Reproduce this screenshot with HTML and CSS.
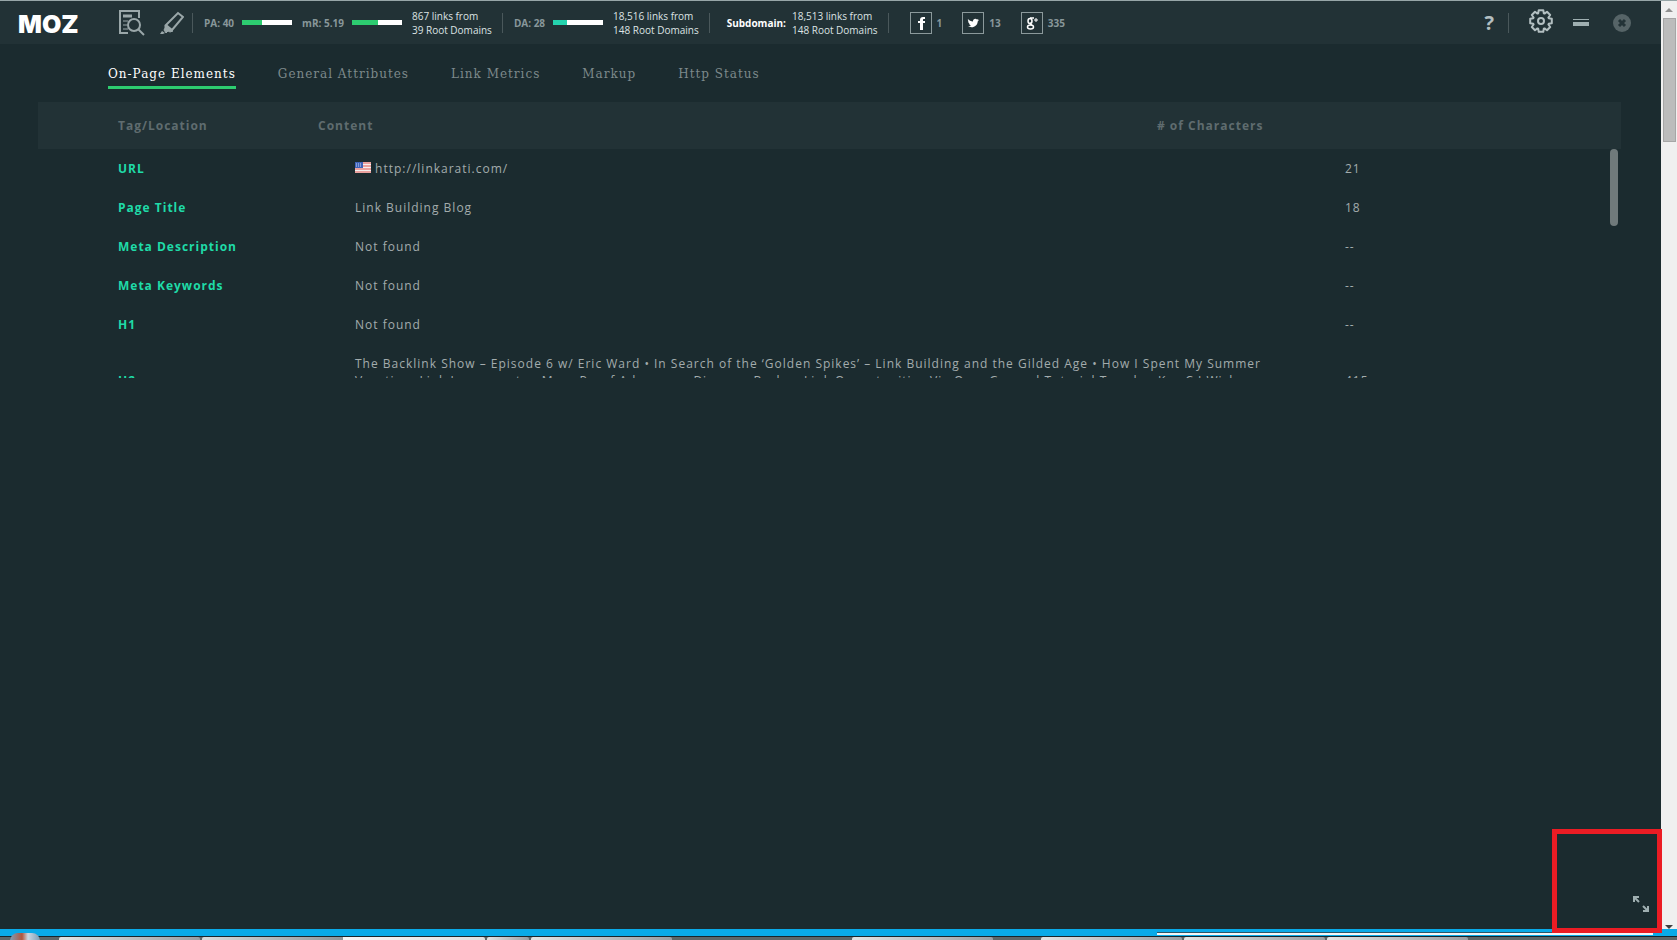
FILE: index.html
```html
<!DOCTYPE html>
<html lang="en">

<head>
    <meta charset="UTF-8">
    <meta name="viewport" content="width=device-width, initial-scale=1.0">
    <title>MozBar - On-Page Elements</title>
    <link rel="stylesheet" href="styles.css">
</head>

<body>

    <div class="window">
        <div class="page">
            <header class="toolbar">
                <a class="logo" href="#">MOZ</a>

                <div class="tools">
                    <button class="icon-btn" type="button" aria-label="Page analysis">
                        <svg width="26" height="26" viewBox="0 0 26 26" fill="none" stroke="#9aa7a9" stroke-width="2">
                            <path d="M9 23H1V1h19v7" />
                            <path d="M4 6h9" stroke-width="3" />
                            <path d="M4 11h5M4 15h4M4 19h5" stroke-width="1" />
                            <circle cx="15" cy="15" r="6" />
                            <path d="M19 19l6 6" />
                        </svg>
                    </button>
                    <button class="icon-btn" type="button" aria-label="Highlight links">
                        <svg width="24" height="24" viewBox="0 0 24 24" fill="none" stroke="#9aa7a9" stroke-width="2">
                            <path d="M6 14L18 2l5 4-11 13z" />
                            <path d="M5 14l8 6-3 1-2-1-2 2-2-3 1-2z" fill="#9aa7a9" stroke-width="1" />
                            <path d="M2 20l3 2-2 1H0z" fill="#9aa7a9" stroke="none" />
                        </svg>
                    </button>
                </div>

                <div class="group">
                    <span class="metric">PA: 40</span>
                    <span class="bar"><span class="fill" style="width: 40%"></span></span>
                    <span class="metric metric-next">mR: 5.19</span>
                    <span class="bar"><span class="fill" style="width: 52%"></span></span>
                    <p class="links">867 links from<br>39 Root Domains</p>
                </div>

                <div class="group">
                    <span class="metric">DA: 28</span>
                    <span class="bar"><span class="fill fill-teal" style="width: 28%"></span></span>
                    <p class="links">18,516 links from<br>148 Root Domains</p>
                </div>

                <div class="group group-sub">
                    <strong class="subdomain">Subdomain:</strong>
                    <p class="links">18,513 links from<br>148 Root Domains</p>
                </div>

                <div class="group social">
                    <a class="share" href="#" aria-label="Facebook">
                        <svg width="22" height="22" viewBox="0 0 22 22">
                            <path d="M10 18v-7H8V9h2V8c0-2 1-3 3-3h2v2h-1c-1 0-1 0-1 1v1h2v2h-2v7z" fill="#fff" />
                        </svg>
                    </a>
                    <span class="count">1</span>
                    <a class="share" href="#" aria-label="Twitter">
                        <svg width="22" height="22" viewBox="0 0 22 22">
                            <path d="M6 7c1 1.500 3 2.500 5 2.500C10.800 7 13.500 6 15 7.500l1.600-.6-.9 1.400 1.300-.3-1.300 1.400c0 4-5 7.600-9.700 4.700 1.300 0 2.300-.3 3-.9-1.200-.2-1.800-.8-2.200-1.600h1C6.600 11 6 10.200 6 9.300l1 .2C6 8.700 5.600 8 6 7z" fill="#fff" />
                        </svg>
                    </a>
                    <span class="count">13</span>
                    <a class="share" href="#" aria-label="Google Plus">
                        <svg width="22" height="22" viewBox="0 0 22 22" fill="none" stroke="#fff" stroke-width="1.500">
                            <ellipse cx="9" cy="9" rx="2" ry="2.500" />
                            <path d="M13 6H9M10 11c-2 1 1 2 1 2" />
                            <ellipse cx="9.500" cy="15" rx="3" ry="2" />
                            <path d="M13 8h4M15 6v4" stroke-width="1" />
                        </svg>
                    </a>
                    <span class="count">335</span>
                </div>

                <div class="controls">
                    <button class="help" type="button" aria-label="Help">?</button>
                    <button class="icon-btn settings" type="button" aria-label="Settings">
                        <svg width="24" height="24" viewBox="-12 -12 24 24" fill="none" stroke="#b3bfc1" stroke-width="2" stroke-linejoin="round">
                            <path d="M-2.800-7.700L-2.300-10.800 2.300-10.800 2.800-7.700 3.500-7.400 6-9.200 9.200-6 7.400-3.500 7.700-2.800 10.800-2.300 10.800 2.300 7.700 2.800 7.400 3.500 9.200 6 6 9.200 3.500 7.400 2.800 7.700 2.300 10.800-2.300 10.800-2.800 7.700-3.500 7.400-6 9.200-9.200 6-7.400 3.500-7.700 2.800-10.800 2.300-10.800-2.300-7.700-2.800-7.400-3.500-9.200-6-6-9.200-3.500-7.400z" />
                            <circle r="3" />
                        </svg>
                    </button>
                    <button class="icon-btn" type="button" aria-label="Minimize">
                        <svg width="16" height="8" viewBox="0 0 16 8" fill="#9fafb1">
                            <path d="M0 0h16v1H0zM0 3h16v4H0z" />
                        </svg>
                    </button>
                    <button class="icon-btn close" type="button" aria-label="Close">
                        <svg width="18" height="18" viewBox="0 0 18 18">
                            <circle cx="9" cy="9" r="9" fill="#566467" />
                            <path d="M6 6l6 6M12 6l-6 6" stroke="#233337" stroke-width="3" />
                        </svg>
                    </button>
                </div>
            </header>

            <nav class="tabs">
                <a class="tab active" href="#">On-Page Elements</a>
                <a class="tab" href="#">General Attributes</a>
                <a class="tab" href="#">Link Metrics</a>
                <a class="tab" href="#">Markup</a>
                <a class="tab" href="#">Http Status</a>
            </nav>

            <main class="panel">
                <table class="head-table">
                    <thead>
                        <tr>
                            <th class="col-tag">Tag/Location</th>
                            <th class="col-content">Content</th>
                            <th># of Characters</th>
                        </tr>
                    </thead>
                </table>
                <div class="scroll-area">
                    <table class="data-table">
                        <tbody>
                            <tr>
                                <th scope="row">URL</th>
                                <td class="content">
                                    <svg class="flag" width="16" height="11" viewBox="0 0 16 11">
                                        <path d="M0 0h16v11H0z" fill="#f4eeee" />
                                        <path d="M0 1h16M0 4h16M0 7h16M0 10h16" stroke="#e0544e" stroke-width="1" />
                                        <path d="M0 0h8v6H0z" fill="#3d62b8" />
                                        <path d="M1 2h6M1 4h6" stroke="#c9d4f0" stroke-dasharray="1 1" />
                                    </svg>
                                    http://linkarati.com/
                                </td>
                                <td>21</td>
                            </tr>
                            <tr>
                                <th scope="row">Page Title</th>
                                <td class="content">Link Building Blog</td>
                                <td>18</td>
                            </tr>
                            <tr>
                                <th scope="row">Meta Description</th>
                                <td class="content">Not found</td>
                                <td>--</td>
                            </tr>
                            <tr>
                                <th scope="row">Meta Keywords</th>
                                <td class="content">Not found</td>
                                <td>--</td>
                            </tr>
                            <tr>
                                <th scope="row">H1</th>
                                <td class="content">Not found</td>
                                <td>--</td>
                            </tr>
                            <tr>
                                <th scope="row">H2</th>
                                <td class="content">The Backlink Show – Episode 6 w/ Eric Ward • In Search of the ‘Golden Spikes’ – Link Building and the Gilded Age • How I Spent My Summer Vacation: Link Juggernauts • More Proof Advocacy • Discover Broken Link Opportunities Via Over General Tutorial Trends • Key C I Wish More People Knew About Link Building</td>
                                <td>415</td>
                            </tr>
                        </tbody>
                    </table>
                    <span class="scroll-thumb"></span>
                </div>
            </main>

            <div class="highlight">
                <button class="icon-btn" type="button" aria-label="Expand">
                    <svg width="16" height="16" viewBox="0 0 16 16" fill="none" stroke="#9fafb1" stroke-width="2">
                        <path d="M1 6V1h5M1 1l5 5M10 15h5v-5M15 15l-5-5" />
                    </svg>
                </button>
            </div>
        </div>

        <div class="scrollbar">
            <span class="arrow arrow-up"></span>
            <span class="scrollbar-thumb"></span>
            <span class="arrow arrow-down"></span>
        </div>
    </div>

    <footer class="taskbar">
        <div class="strip"><span class="strip-white"></span></div>
        <div class="tasks">
            <span class="start"></span>
            <span class="task task-wide"></span>
            <span class="task task-double"></span>
            <span class="task task-small"></span>
            <span class="task task-wide"></span>
            <span class="task-gap"></span>
            <span class="task task-wide"></span>
            <span class="task-space"></span>
            <span class="task task-wide"></span>
            <span class="task task-wide"></span>
            <span class="task task-wide"></span>
        </div>
    </footer>

</body>

</html>
```
FILE: styles.css
```css
* {
    box-sizing: border-box;
}

body {
    margin: 0;
    height: 100vh;
    display: flex;
    flex-direction: column;
    overflow: hidden;
    background-color: #1b2b2f;
    color: #a3acad;
    font-family: 'Open Sans', 'Noto Sans', sans-serif;
    font-size: 12px;
}

a {
    color: inherit;
    text-decoration: none;
}

button {
    padding: 0;
    border: none;
    background: none;
    color: inherit;
    font-family: inherit;
    cursor: pointer;
}

svg {
    display: block;
}

.window {
    flex: 1;
    min-height: 0;
    display: flex;
    border-top: 1px solid #97a6a8;
}

.page {
    position: relative;
    flex: 1;
    min-width: 0;
}

/* top bar */
.toolbar {
    display: flex;
    align-items: center;
    height: 43px;
    padding: 0 30px 0 18px;
    background-color: #223236;
    font-size: 10px;
    white-space: nowrap;
}

.logo {
    width: 101px;
    padding-top: 2px;
    color: #fff;
    font-family: Inter, sans-serif;
    font-size: 25px;
    font-weight: 900;
}

.tools {
    display: flex;
    align-items: center;
    gap: 15px;
    padding-right: 8px;
}

.group {
    display: flex;
    align-items: center;
    height: 20px;
    padding: 0 10px 0 11px;
    border-left: 1px solid #4a585b;
}

.group-sub {
    padding-left: 17px;
}

.metric,
.count {
    color: #88979a;
    font-weight: 700;
}

.metric-next {
    margin-left: 10px;
}

.bar {
    width: 50px;
    height: 5px;
    margin-left: 8px;
    background-color: #fff;
}

.fill {
    display: block;
    height: 5px;
    background-color: #2dcc70;
}

.fill-teal {
    background-color: #24d3ae;
}

.links {
    margin: 0 0 0 10px;
    color: #dde3e4;
    line-height: 14px;
}

.subdomain {
    color: #fff;
}

.group-sub .links {
    margin-left: 6px;
}

.social {
    padding-left: 21px;
}

.share {
    width: 22px;
    height: 22px;
    border: 1px solid #8b999b;
}

.share svg {
    margin: -1px;
}

.count {
    margin: 0 20px 0 5px;
}

.controls {
    display: flex;
    align-items: center;
    gap: 20px;
    margin-left: auto;
}

.help {
    height: 20px;
    padding: 0 14px 0 0;
    border-right: 1px solid #4a585b;
    color: #b3bfc1;
    font-size: 20px;
    font-weight: 700;
    line-height: 18px;
}

.settings {
    padding-bottom: 3px;
}

.close {
    margin-left: 4px;
}

/* tabs */
.tabs {
    display: flex;
    gap: 42px;
    padding: 22px 0 13px 108px;
    color: #7d898b;
    font-family: 'DejaVu Serif', serif;
    font-size: 12px;
    line-height: 16px;
    letter-spacing: 1px;
}

.tab {
    padding-bottom: 4px;
    border-bottom: 3px solid transparent;
}

.tab.active {
    border-bottom-color: #2dcc70;
    color: #fff;
}

/* tables */
.panel {
    margin: 0 40px 0 38px;
    letter-spacing: 1px;
}

table {
    width: 100%;
    border-collapse: collapse;
    table-layout: fixed;
}

th,
td {
    padding: 0;
    text-align: left;
}

.head-table {
    height: 47px;
    background-color: #223236;
    color: #5f6c6f;
}

.head-table .col-tag {
    width: 280px;
    padding-left: 80px;
}

.head-table .col-content {
    width: 53%;
}

.scroll-area {
    position: relative;
    height: 229px;
    overflow: hidden;
}

.data-table th,
.data-table td {
    padding: 11px 0;
    line-height: 17px;
}

.data-table th {
    width: 317px;
    padding-left: 80px;
    color: #1fdba8;
}

.data-table td:last-child {
    width: 276px;
}

.data-table .content {
    padding-right: 70px;
}

.flag {
    display: inline-block;
}

.scroll-thumb {
    position: absolute;
    top: 0;
    right: 3px;
    width: 8px;
    height: 77px;
    border-radius: 4px;
    background-color: #707a7b;
}

/* red frame round the expand button */
.highlight {
    position: absolute;
    right: -1px;
    bottom: -4px;
    z-index: 1;
    display: flex;
    align-items: flex-end;
    justify-content: flex-end;
    width: 110px;
    height: 104px;
    padding: 0 8px 16px 0;
    border: 5px solid #eb1c24;
}

/* browser scrollbar */
.scrollbar {
    display: flex;
    flex-direction: column;
    align-items: center;
    width: 16px;
    padding: 7px 0 0;
    background-color: #f0f0f0;
}

.arrow {
    border: 4px solid transparent;
}

.arrow-up {
    border-top: none;
    border-bottom-color: #909090;
}

.arrow-down {
    margin-top: auto;
    border-bottom: none;
    border-top-color: #404040;
}

.scrollbar-thumb {
    width: 13px;
    height: 124px;
    margin-top: 6px;
    border: 1px solid #a6a6a6;
    background-color: #bcbcbc;
}

/* desktop taskbar */
.strip {
    display: flex;
    justify-content: flex-end;
    align-items: flex-end;
    height: 7px;
    padding: 0 24px 1px 0;
    background-color: #09aae8;
}

.strip-white {
    width: 30%;
    height: 3px;
    border-top: 1px solid #2d5566;
    background-color: #f4f6f7;
}

.tasks {
    display: flex;
    gap: 2px;
    height: 4px;
    border-top: 1px solid #17252b;
    background-color: #5d6668;
}

.start {
    width: 30px;
    height: 8px;
    margin: -4px 17px 0 10px;
    border-radius: 14px 14px 0 0;
    background: linear-gradient(to right, #7f9db5, #b0573f 40%, #c8d6e2 60%, #7f9db5);
}

.task {
    height: 3px;
    border-radius: 2px 2px 0 0;
    background: linear-gradient(to right, #e2e4e4, #9a9ea3);
}

.task-wide {
    width: 141px;
}

.task-double {
    width: 283px;
    background: linear-gradient(to right, #d8dbdb, #8f9599 50%, #f5f5f5 50%, #e0e0e0);
}

.task-small {
    width: 42px;
}

.task-gap {
    width: 176px;
}

.task-space {
    width: 44px;
}
```
